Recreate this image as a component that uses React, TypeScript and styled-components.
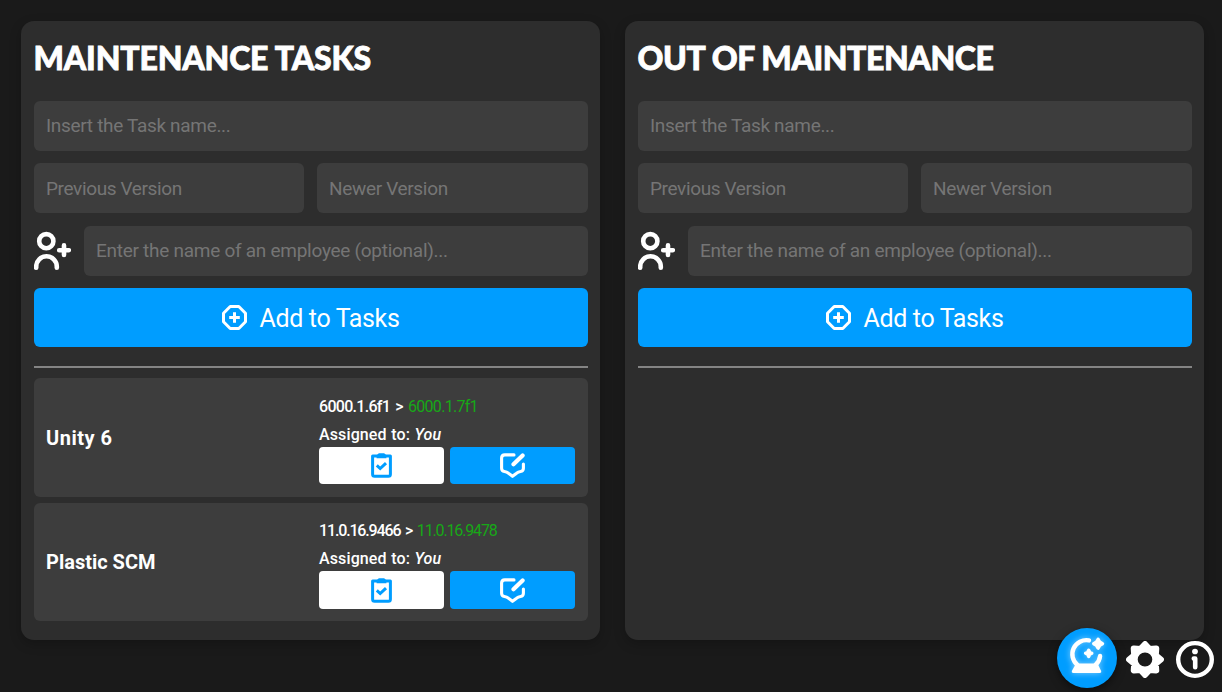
import React from "react";
import styled, { createGlobalStyle } from "styled-components";

const GlobalStyle = createGlobalStyle`
  *, *::before, *::after { box-sizing: border-box; }
  body {
    margin: 0;
    background: #1a1a1a;
    color: #fff;
    font-family: Roboto, "Liberation Sans", sans-serif;
    overflow: hidden;
  }
  input, button { font-family: inherit; border: 0; outline: 0; margin: 0; }
`;

const Page = styled.main`
  display: flex;
  gap: 25px;
  height: 692px;
  padding: 21px 18px 52px 21px;
`;

const Panel = styled.section`
  flex: 1;
  min-width: 0;
  display: flex;
  flex-direction: column;
  padding: 13px 12px 13px 13px;
  border-radius: 13px;
  background: #2d2d2d;
  box-shadow: 0 4px 12px rgba(0, 0, 0, 0.22);
`;

const Title = styled.h1<{ $spacing: number }>`
  margin: 0 0 19px;
  height: 48px;
  line-height: 48px;
  font-family: Lato, "Liberation Sans", sans-serif;
  font-weight: 900;
  font-size: 32px;
  letter-spacing: ${(p) => p.$spacing}px;
  text-indent: -0.5px;
  -webkit-text-stroke: 0.8px #fff;
  white-space: nowrap;
`;

const Form = styled.form`
  display: flex;
  flex-direction: column;
`;

const Row = styled.div<{ $before: number }>`
  display: flex;
  gap: 13px;
  margin-top: ${(p) => p.$before}px;
`;

const Field = styled.input<{ $spacing: number; $width?: number; $lift?: number }>`
  flex: ${(p) => (p.$width ? `0 0 ${p.$width}px` : "1")};
  min-width: 0;
  height: 50px;
  padding: 0 12px ${(p) => p.$lift ?? 0}px;
  border-radius: 6px;
  background: #3d3d3d;
  color: #fff;
  font-size: 19px;
  letter-spacing: ${(p) => p.$spacing}px;
  &::placeholder { color: #757575; opacity: 1; }
`;

const PersonIcon = styled.svg`
  flex: none;
  width: 37px;
  height: 50px;
`;

const AddButton = styled.button`
  display: flex;
  align-items: center;
  justify-content: center;
  gap: 12px;
  height: 59px;
  margin-top: 12px;
  padding: 0 1px 0 0;
  border-radius: 6px;
  background: #009dff;
  color: #fff;
  font-size: 25px;
  letter-spacing: -0.36px;
  span { padding-top: 2px; }
`;

const Divider = styled.hr`
  width: 100%;
  height: 2px;
  margin: 19px 0 10px;
  border: 0;
  background: #848484;
`;

const TaskList = styled.div`
  display: flex;
  flex-direction: column;
  gap: 6px;
`;

const Card = styled.article<{ $height: number }>`
  display: flex;
  align-items: center;
  height: ${(p) => p.$height}px;
  padding: 0 13px 0 12px;
  border-radius: 6px;
  background: #3d3d3d;
`;

const CardName = styled.h2<{ $spacing: number }>`
  flex: 1;
  margin: 0;
  font-size: 20px;
  font-weight: 700;
  line-height: 24px;
  letter-spacing: ${(p) => p.$spacing}px;
`;

const CardInfo = styled.div<{ $top: number }>`
  width: 256px;
  height: 100%;
  padding-top: ${(p) => p.$top}px;
`;

const InfoLine = styled.div<{ $spacing: number; $gap?: number }>`
  height: 28px;
  line-height: 28px;
  font-size: 16px;
  font-weight: 500;
  letter-spacing: ${(p) => p.$spacing}px;
  word-spacing: ${(p) => p.$gap ?? 0}px;
  white-space: nowrap;
`;

const NewVersion = styled.span`
  color: #17a817;
  font-weight: 400;
`;

const Actions = styled.div<{ $height: number }>`
  display: flex;
  gap: 6px;
  height: ${(p) => p.$height}px;
  margin-top: -2px;
`;

const Action = styled.button<{ $primary?: boolean }>`
  flex: 1;
  display: flex;
  align-items: center;
  justify-content: center;
  padding: 0;
  border-radius: 4px;
  background: ${(p) => (p.$primary ? "#009dff" : "#fff")};
  color: ${(p) => (p.$primary ? "#fff" : "#009dff")};
`;

const Dock = styled.nav`
  position: fixed;
  right: 8px;
  bottom: 4px;
  display: flex;
  align-items: center;
  gap: 9px;
  height: 60px;
`;

const OracleButton = styled.button`
  width: 60px;
  height: 60px;
  padding: 0;
  border-radius: 50%;
  background: #009dff;
  box-shadow: 0 3px 9px rgba(0, 0, 0, 0.5);
  svg { display: block; filter: drop-shadow(0 0 3px rgba(255, 255, 255, 0.55)); }
`;

const DockIcons = styled.div`
  display: flex;
  gap: 12px;
  padding-top: 3px;
  svg { display: block; }
`;

const AddPerson = () => (
  <PersonIcon viewBox="34 226 37 50" fill="none" stroke="#fff" strokeWidth="4.6" strokeLinecap="round">
    <circle cx="46.3" cy="241.2" r="7.1" />
    <path d="M36.2 267.8v-1.2a10.3 10.3 0 0 1 20.6 0v1.2M59.2 250.2h9.6M64 245.4v9.6" />
  </PersonIcon>
);

const OctagonPlus = () => (
  <svg width="26" height="26" viewBox="0 0 26 26" fill="none" stroke="#fff" strokeWidth="3" strokeLinejoin="round">
    <path d="M8.2 1.5h8.6L23.5 8.2v8.6L16.8 23.5H8.2L1.5 16.8V8.2zM12.5 7.2v10.6M7.2 12.5h10.6" />
  </svg>
);

const ClipboardTick = () => (
  <svg width="21" height="25" viewBox="0 0 21 25" fill="none" stroke="currentColor" strokeWidth="3">
    <path d="M1.6 3h17.8v18.2q0 2-2 2H3.6q-2 0-2-2z" strokeLinejoin="round" />
    <path d="M5.6 5.2V2.2L7.8.2h5.4l2.2 2v3z" fill="currentColor" stroke="none" />
    <path d="M5.8 12.4l3.4 3.1 5.8-5.4" strokeWidth="3" />
  </svg>
);

const EditBubble = () => (
  <svg width="26" height="25" viewBox="0 0 26 25" fill="none" stroke="currentColor" strokeWidth="3.1" strokeLinecap="round" strokeLinejoin="round">
    <path d="M14 1.9H4.8Q1.6 1.9 1.6 5.1v10.2q0 2.8 2.8 3.2 2.4.3 4 1.7l4.1 3.1 4.1-3.1q1.6-1.4 4-1.7 2.8-.4 2.8-3.2V11" />
    <path d="M13.5 11.2L22.6 2.4" strokeWidth="4.2" />
  </svg>
);

const CrystalBall = () => (
  <svg width="60" height="60" viewBox="1057 628 60 60" fill="none">
    <path d="M1089 640.4a14 14 0 0 0-11.5 24.6M1100.1 656a14 14 0 0 1-4.6 9" stroke="#fff" strokeWidth="4.4" strokeLinecap="round" />
    <path d="M1076 663.5h21.5l3.7 7.6q.5 2-1.5 2h-26.4q-2 0-1.5-2z" fill="#fff" />
    <path
      d="M1098.1 639.3l1.6 2.8 2.8 1.6-2.8 1.6-1.6 2.8-1.6-2.8-2.8-1.6 2.8-1.6zM1088.7 650.2l1 2.1 2.1 1-2.1 1-1 2.1-1-2.1-2.1-1 2.1-1z"
      fill="#fff" stroke="#fff" strokeWidth="3.4" strokeLinejoin="round"
    />
  </svg>
);

const gearOutline = Array.from({ length: 16 }, (_, i) => {
  const r = i % 2 === 0 ? 15.8 : 11.6;
  const a = (i * Math.PI) / 8;
  return `${(r * Math.sin(a)).toFixed(2)},${(-r * Math.cos(a)).toFixed(2)}`;
}).join("L");

const Gear = () => (
  <svg width="38" height="37" viewBox="-19 -19 38 38" preserveAspectRatio="none">
    <path d={`M${gearOutline}Z`} fill="none" stroke="#fff" strokeWidth="6.2" strokeLinejoin="round" />
    <circle r="10.5" fill="none" stroke="#fff" strokeWidth="6.4" />
  </svg>
);

const Info = () => (
  <svg width="38" height="37" viewBox="-19 -19 38 38" preserveAspectRatio="none" fill="none" stroke="#fff" strokeWidth="4.4">
    <circle r="16.8" />
    <circle cy="-8.2" r="2.9" fill="#fff" stroke="none" />
    <path d="M-1.2-1.1H.2V8" strokeWidth="4.6" strokeLinecap="round" strokeLinejoin="round" />
  </svg>
);

function TaskForm() {
  return (
    <Form>
      <Row $before={0}><Field placeholder="Insert the Task name..." $spacing={-0.32} $lift={2} /></Row>
      <Row $before={12}>
        <Field placeholder="Previous Version" $spacing={-0.37} $width={270} />
        <Field placeholder="Newer Version" $spacing={-0.33} />
      </Row>
      <Row $before={13}>
        <AddPerson />
        <Field placeholder="Enter the name of an employee (optional)..." $spacing={-0.27} $lift={2} />
      </Row>
      <AddButton type="button"><OctagonPlus /><span>Add to Tasks</span></AddButton>
    </Form>
  );
}

interface Task {
  name: string;
  from: string;
  to: string;
  height: number;
  top: number;
  actionHeight: number;
  nameSpacing: number;
  versionSpacing: number;
}

const tasks: Task[] = [
  { name: "Unity 6", from: "6000.1.6f1", to: "6000.1.7f1", height: 119, top: 15, actionHeight: 37, nameSpacing: 0.5, versionSpacing: -0.7 },
  { name: "Plastic SCM", from: "11.0.16.9466", to: "11.0.16.9478", height: 118, top: 14, actionHeight: 38, nameSpacing: 0, versionSpacing: -1.15 },
];

function TaskCard({ task }: { task: Task }) {
  return (
    <Card $height={task.height}>
      <CardName $spacing={task.nameSpacing}>{task.name}</CardName>
      <CardInfo $top={task.top}>
        <InfoLine $spacing={task.versionSpacing} $gap={1.8}>
          {task.from} &gt; <NewVersion>{task.to}</NewVersion>
        </InfoLine>
        <InfoLine $spacing={0.12} $gap={0.4}>Assigned to: <em>You</em></InfoLine>
        <Actions $height={task.actionHeight}>
          <Action aria-label="Complete"><ClipboardTick /></Action>
          <Action $primary aria-label="Edit"><EditBubble /></Action>
        </Actions>
      </CardInfo>
    </Card>
  );
}

export default function App() {
  return (
    <>
      <GlobalStyle />
      <Page>
        <Panel>
          <Title $spacing={-0.15}>MAINTENANCE TASKS</Title>
          <TaskForm />
          <Divider />
          <TaskList>{tasks.map((t) => <TaskCard key={t.name} task={t} />)}</TaskList>
        </Panel>
        <Panel>
          <Title $spacing={-0.4}>OUT OF MAINTENANCE</Title>
          <TaskForm />
          <Divider />
        </Panel>
      </Page>
      <Dock>
        <OracleButton aria-label="Oracle"><CrystalBall /></OracleButton>
        <DockIcons><Gear /><Info /></DockIcons>
      </Dock>
    </>
  );
}
